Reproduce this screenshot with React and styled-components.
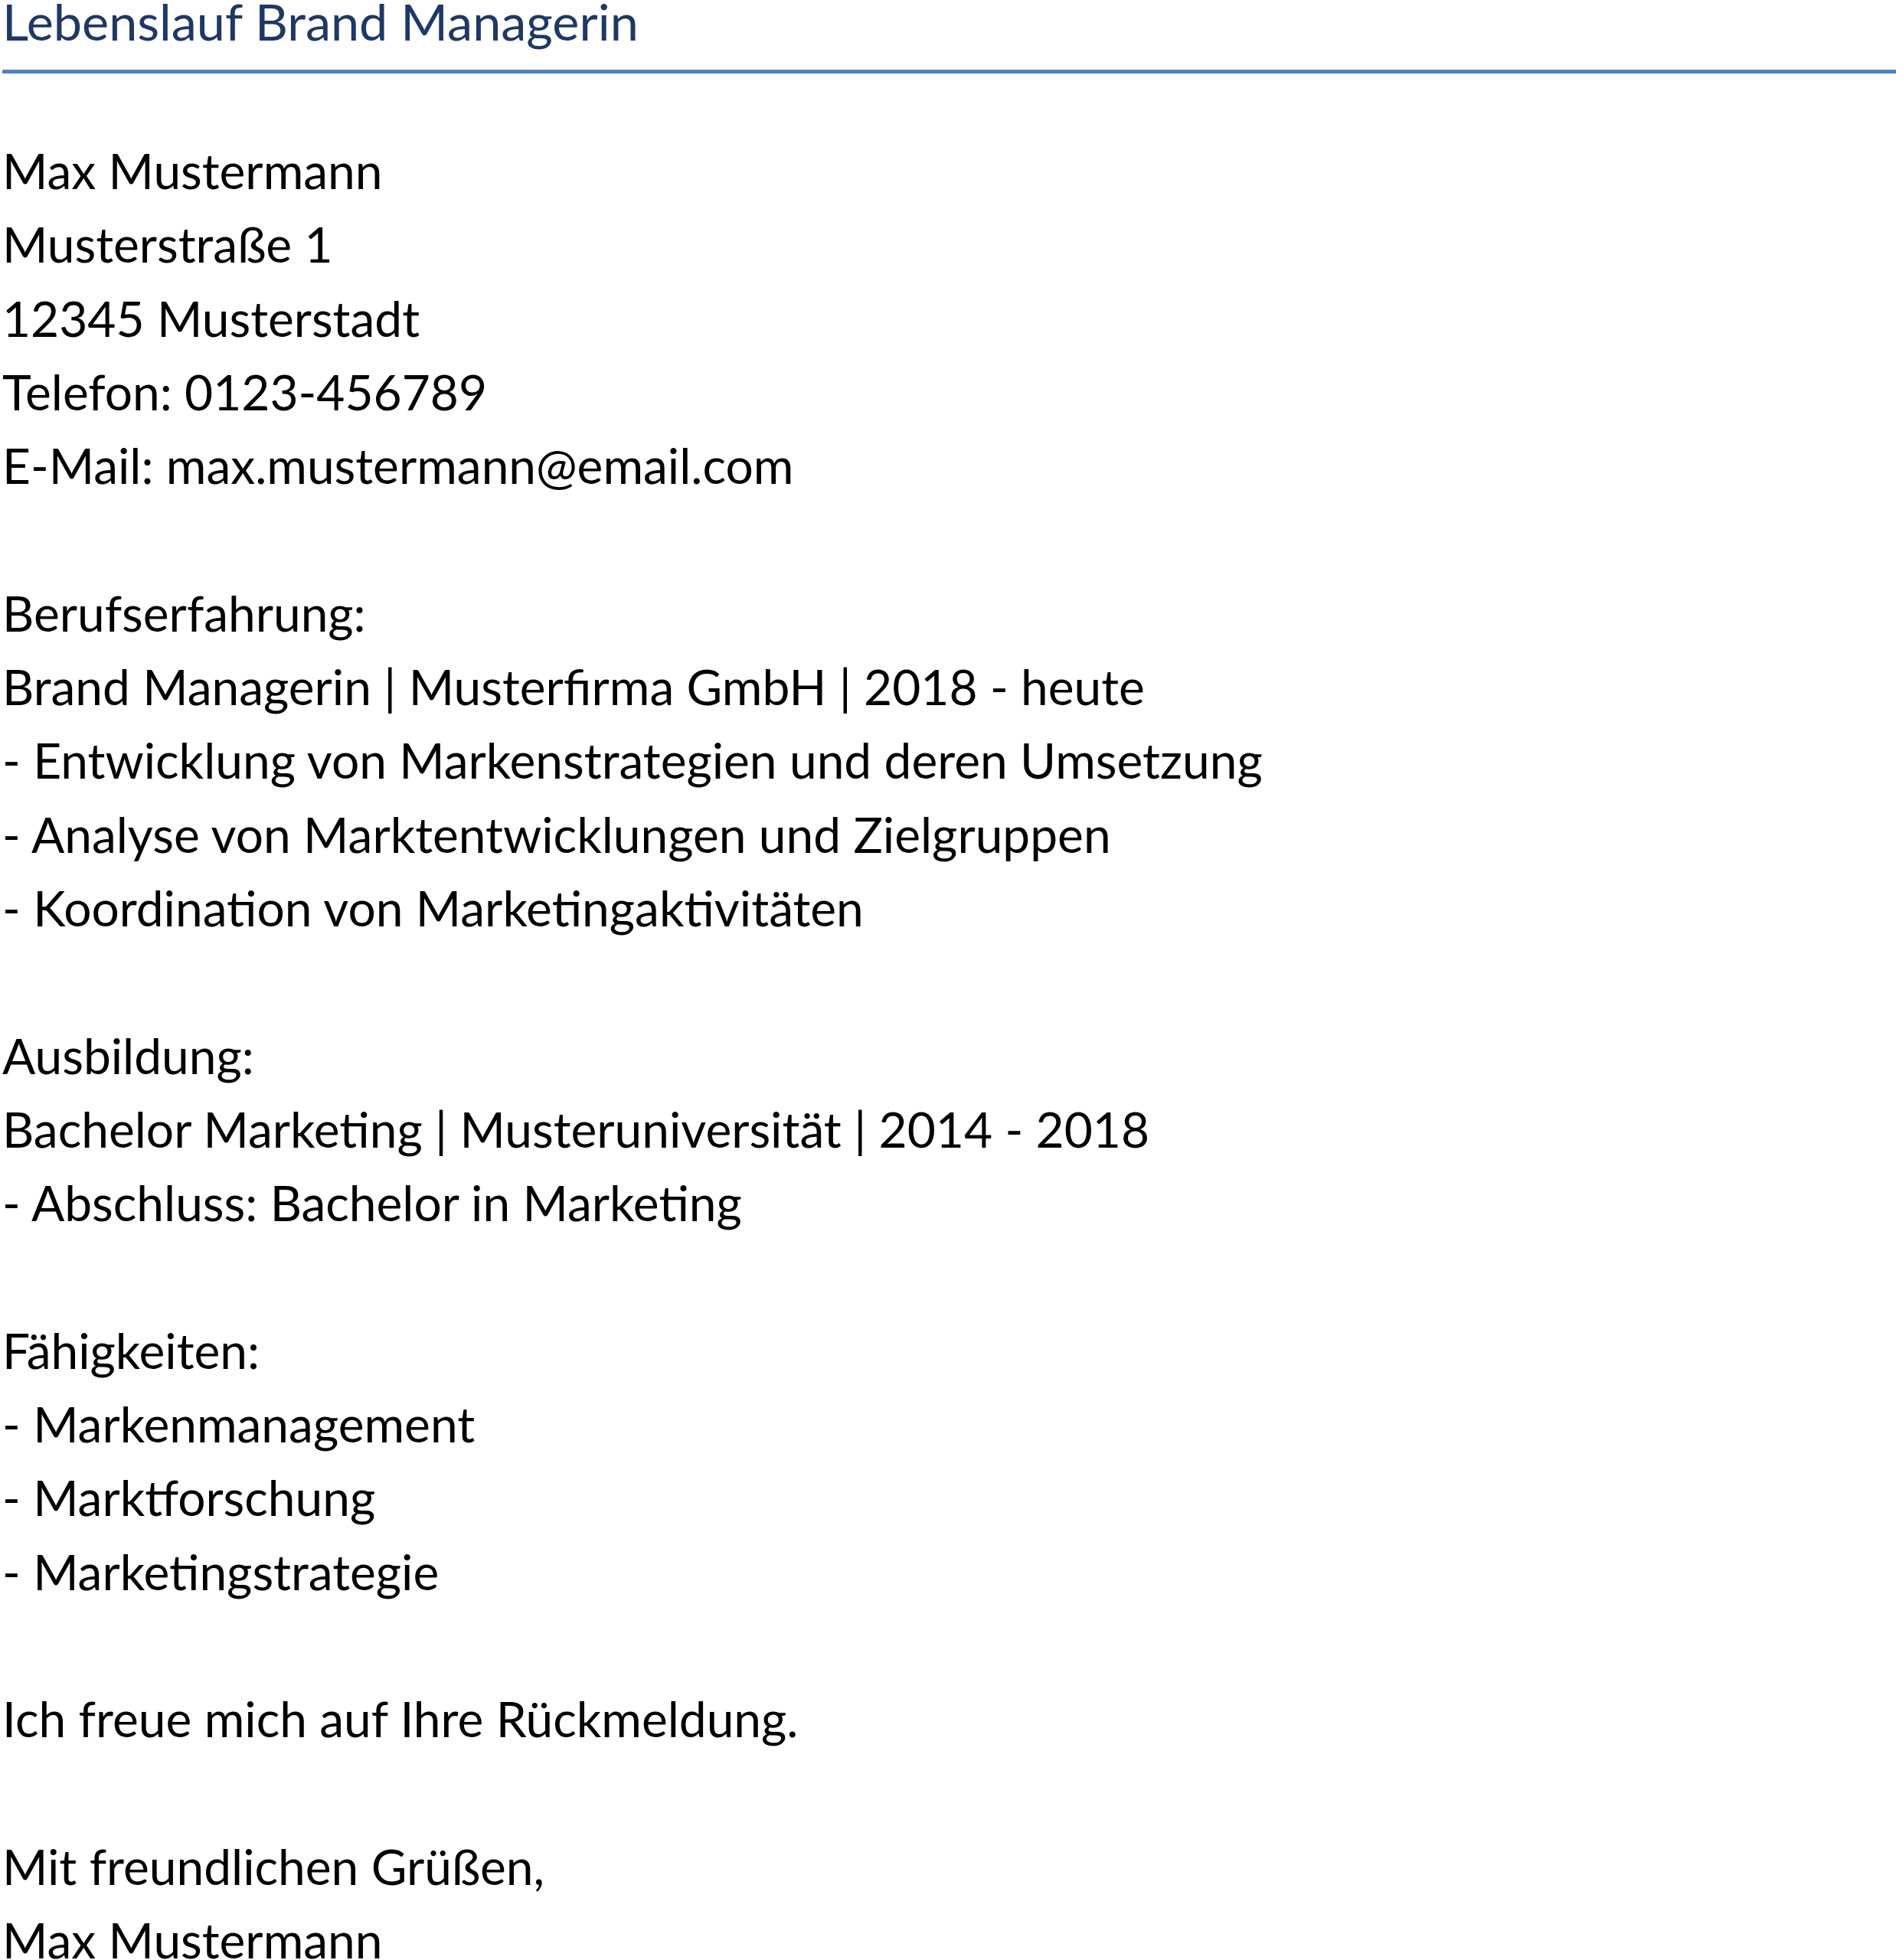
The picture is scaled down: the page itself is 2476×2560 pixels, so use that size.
import React from "react";
import styled, {createGlobalStyle} from "styled-components";

const Global = createGlobalStyle`
  html, body { margin: 0; padding: 0; background: #fff; }
  body { font-family: Lato, "Liberation Sans", sans-serif; }
`

const Page = styled.div`
  width: 2476px;
  padding-left: 3px;
  box-sizing: border-box;
  overflow: hidden;
`

const Title = styled.h1`
  margin: -13px 0 0 0;
  padding-bottom: 24px;
  border-bottom: 5px solid #4f81bd;
  font-size: 66.5px;
  line-height: 80px;
  font-weight: 400;
  color: #1f3864;
`

const Body = styled.div`
  margin-top: 79px;
  font-size: 64px;
  line-height: 96.3px;
  color: #000;
`

const Line = styled.div`
  min-height: 96.3px;
  white-space: pre;
`

const lines = [
    "Max Mustermann",
    "Musterstraße 1",
    "12345 Musterstadt",
    "Telefon: 0123-456789",
    "E-Mail: max.mustermann@email.com",
    "",
    "Berufserfahrung:",
    "Brand Managerin | Musterfirma GmbH | 2018 - heute",
    "- Entwicklung von Markenstrategien und deren Umsetzung",
    "- Analyse von Marktentwicklungen und Zielgruppen",
    "- Koordination von Marketingaktivitäten",
    "",
    "Ausbildung:",
    "Bachelor Marketing | Musteruniversität | 2014 - 2018",
    "- Abschluss: Bachelor in Marketing",
    "",
    "Fähigkeiten:",
    "- Markenmanagement",
    "- Marktforschung",
    "- Marketingstrategie",
    "",
    "Ich freue mich auf Ihre Rückmeldung.",
    "",
    "Mit freundlichen Grüßen,",
    "Max Mustermann",
]

const App = ()=>{
    return <Page>
        <Global/>
        <Title>Lebenslauf Brand Managerin</Title>
        <Body>
            {lines.map((l,i)=><Line key={i}>{l}</Line>)}
        </Body>
    </Page>
}

export default App;
